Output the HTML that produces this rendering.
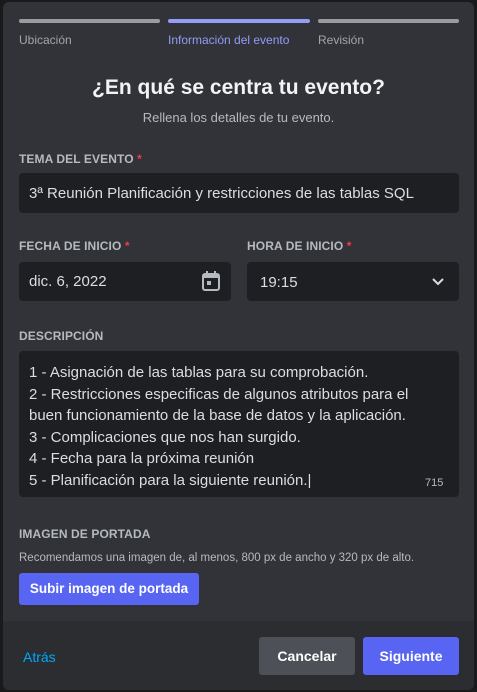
<!DOCTYPE html>
<html><head><style>
*{box-sizing:border-box;margin:0;padding:0}
body{width:477px;height:692px;background:#1a1a1c;font-family:"Liberation Sans",sans-serif;position:relative;overflow:hidden}
.m{position:absolute;left:3px;top:2px;width:471px;height:688px;background:#313338;border-radius:6px;overflow:hidden}
.a{position:absolute}
.bar{position:absolute;top:17px;height:4px;border-radius:2px;background:#999ba1}
.st{position:absolute;top:31px;font-size:12px;color:#a2a5ab}
.lb{position:absolute;font-size:12px;font-weight:bold;color:#b5bac1;letter-spacing:.1px}
.lb span{color:#f23f43}
.in{position:absolute;background:#1e1f22;border-radius:4px;color:#dbdee1;font-size:15px}
.btn{position:absolute;border-radius:3px;color:#fff;font-weight:bold;font-size:14px;text-align:center}
</style></head><body>
<div class="m">
<div class="bar" style="left:16px;width:141px"></div>
<div class="bar" style="left:165px;width:142px;background:#949cf7"></div>
<div class="bar" style="left:315px;width:141px"></div>
<div class="st" style="left:16px">Ubicación</div>
<div class="st" style="left:165px;color:#949cf7">Información del evento</div>
<div class="st" style="left:315px">Revisión</div>
<div class="a" style="left:0;width:471px;top:74px;text-align:center;font-size:21px;font-weight:bold;color:#f2f3f5">¿En qué se centra tu evento?</div>
<div class="a" style="left:0;width:471px;top:108px;text-align:center;font-size:13px;color:#b5bac1">Rellena los detalles de tu evento.</div>
<div class="lb" style="left:16px;top:150px">TEMA DEL EVENTO <span>*</span></div>
<div class="in" style="left:16px;top:171px;width:440px;height:40px;padding:12px 0 0 10px">3ª Reunión Planificación y restricciones de las tablas SQL</div>
<div class="lb" style="left:16px;top:237px">FECHA DE INICIO <span>*</span></div>
<div class="lb" style="left:244px;top:237px">HORA DE INICIO <span>*</span></div>
<div class="in" style="left:16px;top:260px;width:212px;height:39px;padding:11px 0 0 10px">dic. 6, 2022
<svg class="a" style="left:183px;top:9px" width="18" height="20" viewBox="0 0 18 20"><rect x="1" y="3" width="16" height="16" rx="2" fill="none" stroke="#b5bac1" stroke-width="2"/><rect x="1" y="3" width="16" height="4" fill="#b5bac1"/><rect x="4" y="0" width="2" height="4" fill="#b5bac1"/><rect x="12" y="0" width="2" height="4" fill="#b5bac1"/><rect x="5" y="10" width="4" height="4" fill="#b5bac1"/></svg></div>
<div class="in" style="left:244px;top:260px;width:212px;height:39px;padding:12px 0 0 13px">19:15
<svg class="a" style="left:184px;top:15px" width="14" height="9" viewBox="0 0 14 9"><path d="M2 2l5 5 5-5" fill="none" stroke="#dbdee1" stroke-width="2"/></svg></div>
<div class="lb" style="left:16px;top:327px">DESCRIPCIÓN</div>
<div class="in" style="left:16px;top:349px;width:440px;height:146px;padding:11px 0 0 10px;line-height:21.5px">1 - Asignación de las tablas para su comprobación.<br>2 - Restricciones especificas de algunos atributos para el<br>buen funcionamiento de la base de datos y la aplicación.<br>3 - Complicaciones que nos han surgido.<br>4 - Fecha para la próxima reunión<br>5 - Planificación para la siguiente reunión.|
<div class="a" style="left:406px;top:126px;font-size:11px;color:#b5bac1;line-height:12px">715</div></div>
<div class="lb" style="left:16px;top:525px">IMAGEN DE PORTADA</div>
<div class="a" style="left:16px;top:550px;font-size:11.5px;color:#b5bac1">Recomendamos una imagen de, al menos, 800 px de ancho y 320 px de alto.</div>
<div class="btn" style="left:16px;top:571px;width:180px;height:32px;background:#5865f2;font-size:13.5px;line-height:32px">Subir imagen de portada</div>
<div class="a" style="left:0;top:619px;width:471px;height:69px;background:#2b2d31"></div>
<div class="a" style="left:20px;top:647px;font-size:14px;color:#00a8fc">Atrás</div>
<div class="btn" style="left:256px;top:635px;width:96px;height:38px;background:#4e5058;line-height:38px">Cancelar</div>
<div class="btn" style="left:360px;top:635px;width:96px;height:38px;background:#5865f2;line-height:38px">Siguiente</div>
</div>
</body></html>
